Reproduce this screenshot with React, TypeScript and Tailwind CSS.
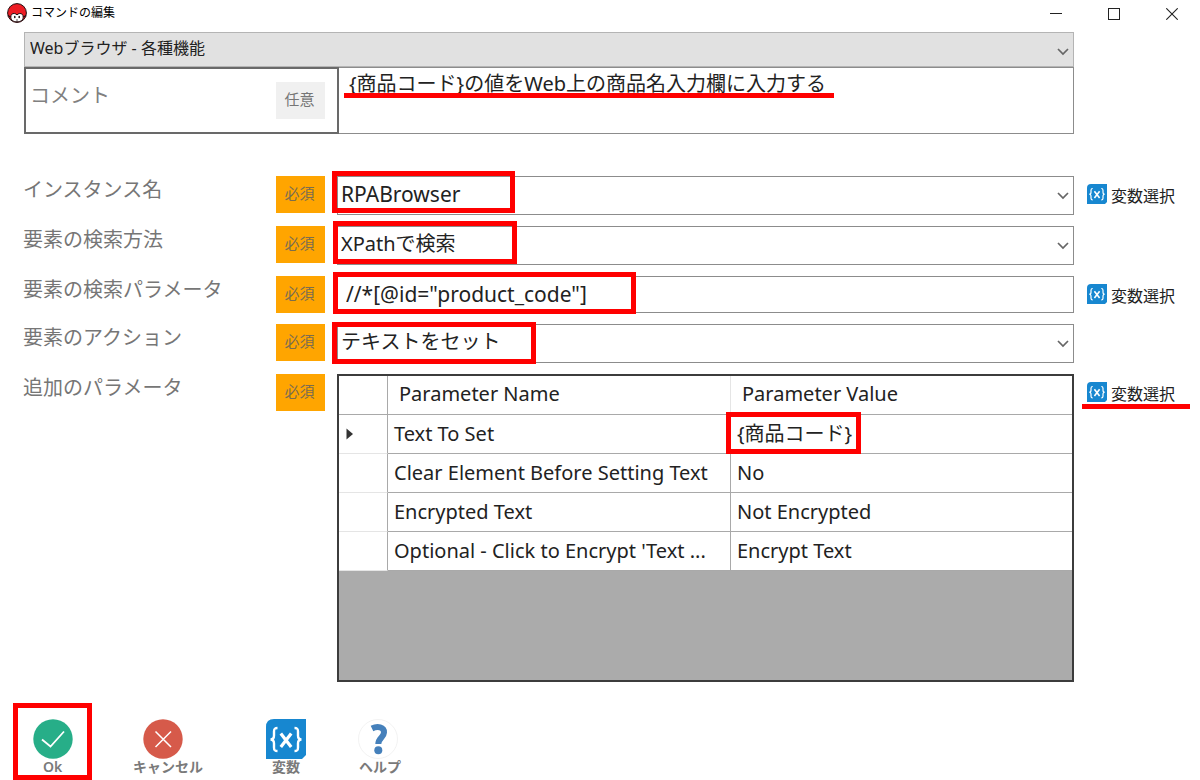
import type { ReactNode } from "react";

const parameters = [
  { name: "Text To Set", value: "{商品コード}", current: true },
  { name: "Clear Element Before Setting Text", value: "No" },
  { name: "Encrypted Text", value: "Not Encrypted" },
  { name: "Optional - Click to Encrypt 'Text ...", value: "Encrypt Text" },
];

function Highlight({ className }: { className: string }) {
  return <span aria-hidden="true" className={`pointer-events-none absolute border-[5px] border-[#ff0000] ${className}`} />;
}

function Chevron() {
  return (
    <svg className="pointer-events-none absolute top-4 right-[5px] h-2 w-3" viewBox="0 0 12 8" fill="none" stroke="#666" strokeWidth="1.7" aria-hidden="true">
      <path d="M1 1 6 6 11 1" />
    </svg>
  );
}

function VariableIcon({ className }: { className: string }) {
  return (
    <svg className={className} viewBox="0 0 40 40" aria-hidden="true">
      <path d="M8 0H40V36L36 40H0V8Q0 0 8 0Z" fill="#1787d0" />
      <g fill="none" stroke="#fff" strokeWidth="2.4">
        <path d="M11.500 9C8.500 9 8 10 8 12.500V16.500C8 19 7 20.500 4.500 20.500C7 20.500 8 22 8 24.500V28.500C8 31 8.500 32 11.500 32" />
        <path d="M28.500 9C31.500 9 32 10 32 12.500V16.500C32 19 33 20.500 35.500 20.500C33 20.500 32 22 32 24.500V28.500C32 31 31.500 32 28.500 32" />
      </g>
      <path d="M14.800 14.500 25.200 28M25.200 14.500 14.800 28" stroke="#fff" strokeWidth="3.200" />
    </svg>
  );
}

function AppIcon() {
  return (
    <svg className="h-5 w-5" viewBox="0 0 20 20" aria-hidden="true">
      <circle cx="10" cy="10" r="9.400" fill="#ed1c24" stroke="#1d1012" strokeWidth="1" />
      <path d="M3.800 14.200C3.800 11.500 5.300 10.300 7.300 10.500 8.600 10.600 9.500 11.200 10 12 10.500 11.200 11.400 10.600 12.700 10.500 14.700 10.300 16.200 11.500 16.200 14.200 16.200 17.300 13.300 18.800 10 18.800S3.800 17.300 3.800 14.200Z" fill="#fff" stroke="#1d1012" strokeWidth="1" />
      <ellipse cx="7.800" cy="14" rx="0.800" ry="1.300" fill="#1d1012" />
      <ellipse cx="12.200" cy="14" rx="0.800" ry="1.300" fill="#1d1012" />
      <path d="M9 17H11" stroke="#1d1012" strokeWidth="0.700" />
      <path d="M0.900 12.500 3.500 14M19.100 12.500 16.500 14" stroke="#1d1012" strokeWidth="1.100" />
    </svg>
  );
}

function VariablePicker({ underlined = false }: { underlined?: boolean }) {
  return (
    <button type="button" className="relative mt-2 ml-[13px] flex h-6 items-center gap-1 self-start justify-self-start whitespace-nowrap text-base leading-6 text-[#222]">
      <VariableIcon className="-mt-1 h-5 w-5" />
      変数選択
      {underlined && <span aria-hidden="true" className="absolute top-[22px] -right-[15px] -left-[5px] h-[5px] bg-[#ff0000]" />}
    </button>
  );
}

function FieldRow({ id, label, picker, children }: { id: string; label: string; picker?: ReactNode; children: ReactNode }) {
  return (
    <div className="grid grid-cols-[252px_49px_minmax(0,1fr)_126px]">
      <label htmlFor={id} className="-ml-px text-xl leading-7 text-[#767676]">
        {label}
      </label>
      <span className="flex h-[37px] items-center justify-center bg-[#ffa500] pr-0.5 pb-0.5 text-[15px] text-[#7b6d50]">必須</span>
      <div className="relative ml-3">{children}</div>
      {picker}
    </div>
  );
}

const selectClass =
  "block h-[39px] w-full appearance-none border border-[#8c8c8c] bg-white pr-6 pb-1 pl-[3px] leading-7 text-[#222] outline-none";

function ActionButton({ label, icon, className = "" }: { label: string; icon: ReactNode; className?: string }) {
  return (
    <button type="button" className={`flex flex-col items-center whitespace-nowrap text-sm leading-4 font-semibold text-[#7a7a7a] ${className}`}>
      {icon}
      {label}
    </button>
  );
}

export default function App() {
  return (
    <div className="flex min-h-screen flex-col bg-white font-['Noto_Sans','Noto_Sans_CJK_JP',sans-serif] text-[#222]">
      <header className="flex h-8 items-start justify-between pr-[15px] pl-[7px]">
        <div className="flex items-center gap-1 pt-[3px]">
          <AppIcon />
          <h1 className="text-xs leading-5 text-black">コマンドの編集</h1>
        </div>
        <div className="flex gap-[31px]">
          <button type="button" aria-label="最小化" className="flex h-[27px] w-[27px] items-center justify-center">
            <svg className="h-3 w-3" viewBox="0 0 12 12"><path d="M0 5.500H12" stroke="#222" /></svg>
          </button>
          <button type="button" aria-label="最大化" className="flex h-[27px] w-[27px] items-center justify-center">
            <svg className="h-3 w-3" viewBox="0 0 12 12"><rect x="0.500" y="0.500" width="11" height="11" fill="none" stroke="#222" /></svg>
          </button>
          <button type="button" aria-label="閉じる" className="flex h-[27px] w-[27px] items-center justify-center">
            <svg className="h-3 w-3" viewBox="0 0 12 12"><path d="M0.300 0.300 11.700 11.700M11.700 0.300 0.300 11.700" stroke="#222" strokeWidth="1.100" /></svg>
          </button>
        </div>
      </header>

      <main className="pl-6">
        <section className="mr-[126px]">
          <div className="relative">
            <select aria-label="コマンド" className="block h-[35px] w-full appearance-none border border-[#b4b4b4] bg-[#e1e1e1] pr-6 pb-1 pl-[5px] text-base leading-6 text-[#222] outline-none">
              <option>Webブラウザ - 各種機能</option>
            </select>
            <Chevron />
          </div>
          <div className="flex h-[67px]">
            <div className="flex w-[315px] shrink-0 items-start justify-between border-2 border-[#696969] pt-[13px] pr-3 pl-1">
              <label htmlFor="comment" className="text-xl leading-7 text-[#808080]">コメント</label>
              <span className="flex h-[37px] w-[49px] items-center justify-center bg-[#f0f0f0] pr-0.5 pb-0.5 text-[15px] text-[#767676]">任意</span>
            </div>
            <div className="relative min-w-0 flex-1">
              <textarea
                id="comment"
                defaultValue="{商品コード}の値をWeb上の商品名入力欄に入力する"
                className="block h-full w-full resize-none overflow-hidden border border-l-0 border-[#8c8c8c] pt-0.5 pl-[10px] text-xl leading-7 text-[#222] outline-none"
              />
              <span aria-hidden="true" className="pointer-events-none absolute top-[26px] left-[5px] h-[5px] w-[490px] bg-[#ff0000]" />
            </div>
          </div>
        </section>

        <section className="mt-[42px] flex flex-col gap-[11px]">
          <FieldRow id="instance" label="インスタンス名" picker={<VariablePicker />}>
            <select id="instance" className={`${selectClass} text-[21px]`}>
              <option>RPABrowser</option>
            </select>
            <Chevron />
            <Highlight className="-top-[5px] -left-[5px] h-[42px] w-[183px]" />
          </FieldRow>
          <FieldRow id="search-method" label="要素の検索方法">
            <select id="search-method" className={`${selectClass} text-xl`}>
              <option>XPathで検索</option>
            </select>
            <Chevron />
            <Highlight className="-top-[5px] -left-1 h-[43px] w-[184px]" />
          </FieldRow>
          <FieldRow id="search-parameter" label="要素の検索パラメータ" picker={<VariablePicker />}>
            <input
              id="search-parameter"
              type="text"
              defaultValue={'//*[@id="product_code"]'}
              className="block h-[37px] w-full border border-[#8c8c8c] pb-0.5 pl-2 text-[21px] leading-7 text-[#222] outline-none"
            />
            <Highlight className="-top-1 -left-1 h-[42px] w-[303px]" />
          </FieldRow>
          <FieldRow id="action" label="要素のアクション">
            <select id="action" className={`${selectClass} text-xl`}>
              <option>テキストをセット</option>
            </select>
            <Chevron />
            <Highlight className="-top-0.5 -left-[5px] h-[42px] w-[204px]" />
          </FieldRow>
          <FieldRow id="parameters" label="追加のパラメータ" picker={<VariablePicker underlined />}>
            <div className="h-[308px] border-2 border-[#3c3c3c] bg-[#ababab]">
              <table id="parameters" className="w-full table-fixed border-separate border-spacing-0 bg-white text-left text-xl leading-7">
                <colgroup>
                  <col className="w-[49px]" />
                  <col className="w-[343px]" />
                  <col />
                </colgroup>
                <thead>
                  <tr className="h-[39px]">
                    <th className="border-r border-b border-[#a9a9a9] p-0" />
                    <th className="border-r border-b border-r-[#e5e5e5] border-b-[#a9a9a9] p-0 pb-0.5 pl-[11px] font-normal">Parameter Name</th>
                    <th className="border-b border-[#a9a9a9] p-0 pb-0.5 pl-[11px] font-normal">Parameter Value</th>
                  </tr>
                </thead>
                <tbody>
                  {parameters.map((row) => (
                    <tr key={row.name} className="h-[39px]">
                      <td className="border-r border-b border-r-[#a9a9a9] border-b-[#e5e5e5] p-0 pl-[7px]">
                        {row.current && (
                          <svg className="h-3 w-2" viewBox="0 0 8 12" aria-hidden="true"><path d="M0.500 0.500 7 6 0.500 11.500Z" fill="#333" /></svg>
                        )}
                      </td>
                      <td className="border-r border-b border-[#a9a9a9] p-0 pl-1.5 whitespace-nowrap">{row.name}</td>
                      <td className="relative border-b border-[#a9a9a9] p-0 pl-1.5">
                        {row.value}
                        {row.current && <Highlight className="-top-[3px] -left-[5px] h-[42px] w-[135px]" />}
                      </td>
                    </tr>
                  ))}
                </tbody>
              </table>
            </div>
          </FieldRow>
        </section>
      </main>

      <footer className="mt-[21px] flex items-start pl-[13px]">
        <ActionButton
          label="Ok"
          className="h-[77px] w-[79px] border-[5px] border-[#ff0000] pt-[11px]"
          icon={
            <svg className="h-10 w-10 shrink-0" viewBox="0 0 40 40" aria-hidden="true">
              <circle cx="20" cy="20" r="19.700" fill="#27ae88" />
              <path d="M9 20.500 17.500 27.500 31 12.500" fill="none" stroke="#fff" strokeWidth="1.800" />
            </svg>
          }
        />
        <ActionButton
          label="キャンセル"
          className="ml-[41px] w-[70px] pt-4"
          icon={
            <svg className="mr-2.5 h-10 w-10" viewBox="0 0 40 40" aria-hidden="true">
              <circle cx="20" cy="20" r="19.700" fill="#d65a4a" />
              <path d="M12.500 12.500 28 28M28 12.500 12.500 28" stroke="#fff" strokeWidth="1.500" />
            </svg>
          }
        />
        <ActionButton label="変数" className="ml-[63px] w-10 pt-4" icon={<VariableIcon className="h-10 w-10" />} />
        <ActionButton
          label="ヘルプ"
          className="ml-[52px] w-11 pt-4"
          icon={
            <svg className="mr-1 h-10 w-10" viewBox="0 0 40 40" aria-hidden="true">
              <circle cx="20" cy="20" r="19.500" fill="#fff" stroke="#ececec" strokeWidth="0.700" />
              <path d="M14 9.500C19.500 6.800 26.300 8 26 13.500 25.700 18.800 20.500 18.500 20.300 25" fill="none" stroke="#4580bb" strokeWidth="6" />
              <circle cx="20.300" cy="31.300" r="4" fill="#4580bb" />
            </svg>
          }
        />
      </footer>
    </div>
  );
}
